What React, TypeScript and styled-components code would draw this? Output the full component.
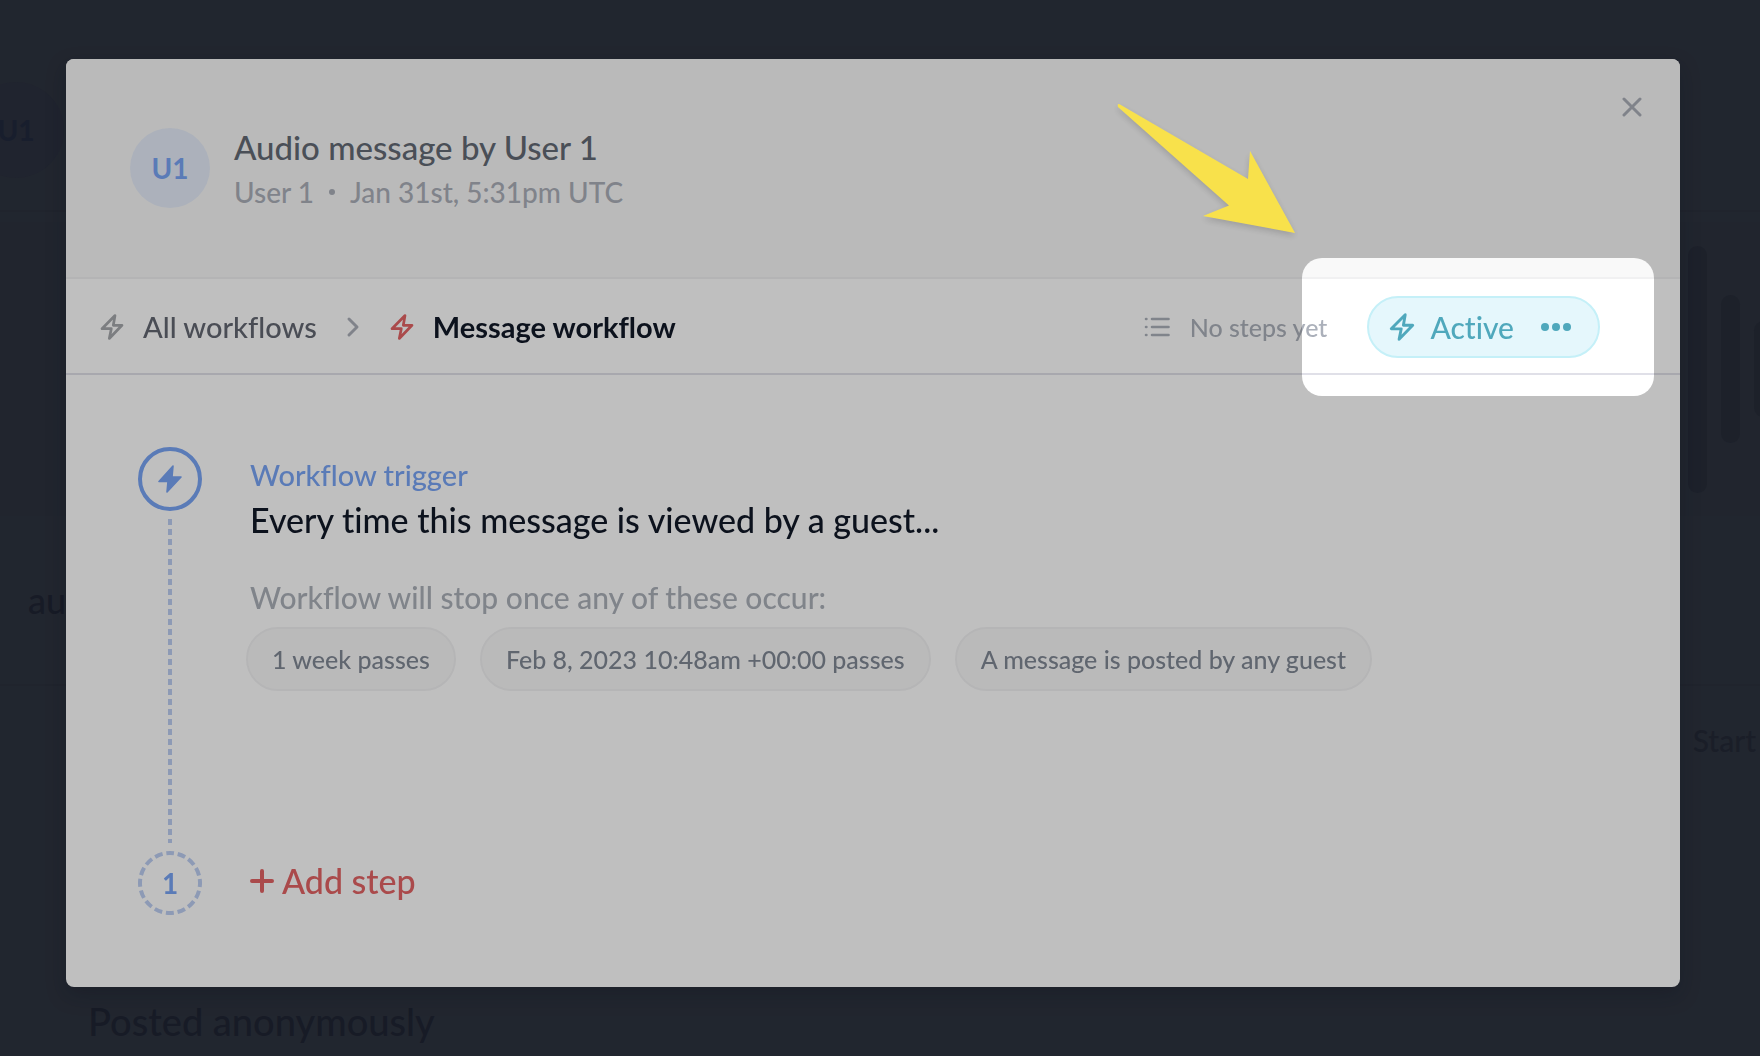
import React from "react";
import styled, { createGlobalStyle, css } from "styled-components";

const GlobalStyle = createGlobalStyle`
  *, *::before, *::after { box-sizing: border-box; }
  body {
    margin: 0;
    overflow: hidden;
    background: #2d333f;
    font-family: Lato, "Open Sans", sans-serif;
    font-weight: 500;
    font-variant-ligatures: none;
  }
  h1, h2, p, ol, ul { margin: 0; padding: 0; list-style: none; font-weight: inherit; }
  button { font: inherit; color: inherit; background: none; border: 0; padding: 0; cursor: pointer; }
  svg { display: block; flex: none; }
`;

/* ---------- page behind the dialog ---------- */

const Page = styled.main`
  display: flex;
  flex-direction: column;
  height: 100vh;
  overflow: hidden;
  color: #1f2433;
`;

const PageHead = styled.div`
  height: 212px;
  padding-top: 82px;
  border-bottom: 2px solid #2b303c;
`;

const PageAvatar = styled.div`
  display: grid;
  place-items: center;
  width: 96px;
  height: 96px;
  margin-left: -32px;
  border-radius: 50%;
  background: #2b303f;
  color: #20283d;
  font-size: 28px;
  font-weight: 700;
`;

const Wave = styled.div`
  display: flex;
  align-items: center;
  justify-content: flex-end;
  gap: 14px;
  height: 294px;
  margin-top: 10px;
  background: #2c323e;
`;

const WaveBar = styled.span<{ $height: number }>`
  width: 19px;
  height: ${(p) => p.$height}px;
  border-radius: 10px;
  background: #272c39;
  &:last-child { margin-right: -13px; }
`;

const Transcript = styled.p`
  height: 170px;
  padding: 62px 28px;
  border-bottom: 2px solid #2b303c;
  font-size: 36px;
  line-height: 44px;
`;

const StartLine = styled.p`
  margin-top: 36px;
  padding-right: 4px;
  color: #232836;
  text-align: right;
  font-size: 30px;
  line-height: 36px;
`;

const Posted = styled.p`
  margin-top: auto;
  padding: 0 88px 13px;
  font-size: 38px;
  line-height: 44px;
`;

/* ---------- dialog ---------- */

const Overlay = styled.div`
  position: fixed;
  inset: 0;
  display: flex;
  padding: 59px 80px 69px 66px;
`;

const Dialog = styled.section`
  flex: 1;
  display: flex;
  flex-direction: column;
  min-width: 0;
  border-radius: 8px;
  overflow: hidden;
  background: #fff;
  box-shadow: 0 8px 20px rgba(16, 20, 36, 0.25);
`;

const Header = styled.header`
  display: flex;
  align-items: center;
  gap: 24px;
  padding: 69px 36px 69px 64px;
  background: #f9f9f9;
  border-bottom: 2px solid #f1f1f2;
`;

const Avatar = styled.div`
  display: grid;
  place-items: center;
  width: 80px;
  height: 80px;
  border-radius: 50%;
  background: #e6edfa;
  color: #79a4f5;
  font-size: 28px;
  font-weight: 700;
`;

const HeaderText = styled.div`
  flex: 1;
  margin: -4px 0 -6px;
`;

const Title = styled.h1`
  color: #636a74;
  font-size: 33px;
  line-height: 46px;
`;

const Meta = styled.p`
  display: flex;
  align-items: center;
  gap: 15px;
  color: #abafb9;
  font-size: 28px;
  line-height: 44px;
`;

const Dot = styled.span`
  width: 6px;
  height: 6px;
  border-radius: 50%;
  background: currentColor;
`;

const CloseButton = styled.button`
  align-self: flex-start;
  margin-top: -33px;
  padding: 2px;
  color: #abafb9;
`;

const Toolbar = styled.nav`
  display: flex;
  align-items: center;
  gap: 18px;
  height: 96px;
  padding: 2px 80px 0 33px;
  border-bottom: 2px solid #e0e0e8;
  font-size: 29px;
  line-height: 36px;
`;

const Crumb = styled.button<{ $current?: boolean }>`
  display: flex;
  align-items: center;
  gap: 18px;
  color: #636772;
  ${(p) =>
    p.$current &&
    css`
      color: #111827;
      font-weight: 700;
    `}
`;

const CrumbIcon = styled.span<{ $color: string }>`
  color: ${(p) => p.$color};
`;

const StepCount = styled.span`
  display: flex;
  align-items: center;
  gap: 20px;
  margin-left: auto;
  margin-right: 22px;
  color: #abb0ba;
  font-size: 25px;
`;

const StatusButton = styled.button`
  display: flex;
  align-items: center;
  gap: 14px;
  height: 62px;
  padding: 0 27px 0 19px;
  border: 2px solid #c5f0f8;
  border-radius: 31px;
  background: #e5f7fc;
  color: #4fa8bc;
  font-size: 30px;
`;

const Dots = styled.span`
  display: flex;
  gap: 3px;
  margin-left: 13px;
  i {
    width: 8px;
    height: 8px;
    border-radius: 50%;
    background: currentColor;
  }
`;

const Steps = styled.ol`
  flex: 1;
  padding: 72px;
`;

const Step = styled.li`
  display: flex;
  gap: 44px;
`;

const Rail = styled.div`
  display: flex;
  flex-direction: column;
  align-items: center;
  flex: none;
  width: 64px;
`;

const Marker = styled.span`
  display: grid;
  place-items: center;
  width: 64px;
  height: 64px;
  border: 4px solid #79a4f5;
  border-radius: 50%;
  color: #79a4f5;
`;

const NextMarker = styled.span`
  display: grid;
  width: 64px;
  height: 64px;
  place-items: center;
  color: #79a4f5;
  font-size: 28px;
  font-weight: 700;
  > * { grid-area: 1 / 1; }
`;

const Connector = styled.span`
  flex: 1;
  width: 4px;
  margin: 8px 0;
  background: repeating-linear-gradient(#bdcef2 0 6px, transparent 6px 10px);
`;

const StepContent = styled.div`
  flex: 1;
  min-height: 404px;
  padding-top: 6px;
  margin-left: 4px;
`;

const Kicker = styled.p`
  color: #79a4f5;
  font-size: 29px;
  line-height: 44px;
`;

const Headline = styled.h2`
  color: #111827;
  font-size: 34px;
  line-height: 46px;
`;

const StopNote = styled.p`
  margin-top: 32px;
  color: #abb0b9;
  font-size: 30px;
  line-height: 44px;
`;

const Chips = styled.ul`
  display: flex;
  flex-wrap: wrap;
  gap: 24px;
  margin: 8px 0 0 -4px;
`;

const Chip = styled.li`
  padding: 12px 24px;
  border: 2px solid #f2f2f3;
  border-radius: 32px;
  background: #f9f9f9;
  color: #808895;
  font-size: 25px;
  line-height: 36px;
`;

const AddStep = styled.button`
  display: flex;
  align-items: center;
  gap: 8px;
  margin-left: 4px;
  padding-bottom: 4px;
  color: #e36364;
  font-size: 34px;
  line-height: 44px;
`;

/* ---------- tour layer ---------- */

const Spotlight = styled.div`
  position: fixed;
  top: 258px;
  right: 106px;
  width: 352px;
  height: 138px;
  border-radius: 20px;
  box-shadow: 0 0 0 3000px rgba(0, 0, 0, 0.25);
  pointer-events: none;
`;

const Pointer = styled.svg`
  position: fixed;
  top: 100px;
  right: 460px;
  filter: drop-shadow(0 3px 3px rgba(0, 0, 0, 0.16));
  pointer-events: none;
`;

const BoltOutline = ({ size = 26 }: { size?: number }) => (
  <svg width={size} height={size + 2} viewBox="0 0 26 28" fill="none" stroke="currentColor" strokeWidth="2.7" strokeLinejoin="round" aria-hidden="true">
    <path d="M16 2.500 L3 15.700 H12.300 L10.300 25.500 L23 12.300 H14.300 Z" />
  </svg>
);

const BoltSolid = () => (
  <svg width="24" height="28" viewBox="0 0 24 28" fill="currentColor" stroke="currentColor" strokeWidth="1.6" strokeLinejoin="round" aria-hidden="true">
    <path d="M15 1 L1 16.500 H10 L9 27 L23 12 H14 Z" />
  </svg>
);

const ChevronRight = () => (
  <svg width="36" height="24" viewBox="0 0 36 24" fill="none" stroke="#abafb9" strokeWidth="3" strokeLinecap="round" strokeLinejoin="round" aria-hidden="true">
    <path d="M14 4 L22 12 L14 20" />
  </svg>
);

const ListIcon = () => (
  <svg width="26" height="20" viewBox="0 0 26 20" fill="none" stroke="currentColor" strokeWidth="2.6" strokeLinecap="round" aria-hidden="true">
    <path d="M8 2 H24.5 M8 10 H24.5 M8 18 H24.5 M2 2 H2.4 M2 10 H2.4 M2 18 H2.4" />
  </svg>
);

const bars = [247, 148, 96];

const stopConditions = [
  "1 week passes",
  "Feb 8, 2023 10:48am +00:00 passes",
  "A message is posted by any guest",
];

export default function App() {
  return (
    <>
      <GlobalStyle />
      <Page aria-hidden="true">
        <PageHead>
          <PageAvatar>U1</PageAvatar>
        </PageHead>
        <Wave>
          {bars.map((h) => (
            <WaveBar key={h} $height={h} />
          ))}
        </Wave>
        <Transcript>audio</Transcript>
        <StartLine>Start</StartLine>
        <Posted>Posted anonymously</Posted>
      </Page>

      <Overlay>
        <Dialog role="dialog" aria-labelledby="dialog-title">
          <Header>
            <Avatar>U1</Avatar>
            <HeaderText>
              <Title id="dialog-title">Audio message by User 1</Title>
              <Meta>
                <span>User 1</span>
                <Dot />
                <span>Jan 31st, 5:31pm UTC</span>
              </Meta>
            </HeaderText>
            <CloseButton aria-label="Close">
              <svg width="20" height="20" viewBox="0 0 20 20" stroke="currentColor" strokeWidth="3" strokeLinecap="round">
                <path d="M2 2 L18 18 M18 2 L2 18" />
              </svg>
            </CloseButton>
          </Header>

          <Toolbar aria-label="Workflows">
            <Crumb>
              <CrumbIcon $color="#a6a8ac"><BoltOutline /></CrumbIcon>
              All workflows
            </Crumb>
            <ChevronRight />
            <Crumb $current>
              <CrumbIcon $color="#e36364"><BoltOutline /></CrumbIcon>
              Message workflow
            </Crumb>
            <StepCount>
              <ListIcon />
              No steps yet
            </StepCount>
            <StatusButton>
              <BoltOutline size={28} />
              Active
              <Dots><i /><i /><i /></Dots>
            </StatusButton>
          </Toolbar>

          <Steps>
            <Step>
              <Rail>
                <Marker><BoltSolid /></Marker>
                <Connector />
              </Rail>
              <StepContent>
                <Kicker>Workflow trigger</Kicker>
                <Headline>Every time this message is viewed by a guest...</Headline>
                <StopNote>Workflow will stop once any of these occur:</StopNote>
                <Chips>
                  {stopConditions.map((text) => (
                    <Chip key={text}>{text}</Chip>
                  ))}
                </Chips>
              </StepContent>
            </Step>
            <Step>
              <Rail>
                <NextMarker>
                  <svg width="64" height="64" viewBox="0 0 64 64" fill="none" aria-hidden="true">
                    <circle cx="32" cy="32" r="30" stroke="#bdcef2" strokeWidth="4" strokeDasharray="8 3.78" strokeDashoffset="4" transform="rotate(-90 32 32)" />
                  </svg>
                  <span>1</span>
                </NextMarker>
              </Rail>
              <AddStep>
                <svg width="24" height="24" viewBox="0 0 24 24" stroke="currentColor" strokeWidth="4" strokeLinecap="round" aria-hidden="true">
                  <path d="M12 2 V22 M2 12 H22" />
                </svg>
                Add step
              </AddStep>
            </Step>
          </Steps>
        </Dialog>
      </Overlay>

      <Spotlight />
      <Pointer width="184" height="140" viewBox="0 0 184 140" fill="#f8e14b" aria-hidden="true">
        <path d="M4 4.500 L132 79 L134 51 L179 133 L87 116 L113 105.500 L2 7 Q1 3 4 4.500 Z" />
      </Pointer>
    </>
  );
}
